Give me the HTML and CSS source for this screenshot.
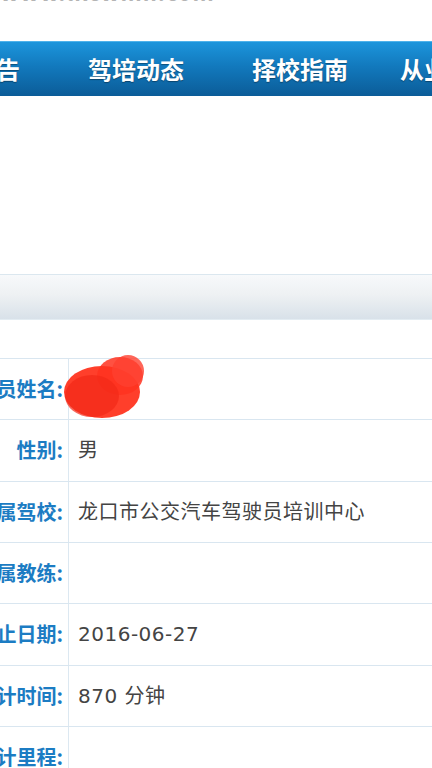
FILE: index.html
```html
<!DOCTYPE html>
<html lang="zh">
<head>
  <meta charset="UTF-8">
  <title>学员学时查询</title>
  <meta name="viewport" content="width=device-width, initial-scale=1">
  <link rel="stylesheet" href="styles.css">
</head>
<body>
  <div class="page">
    <div class="site-url">www.lkcwmh.com</div>

    <div class="nav">
      <a class="nav-item">通知公告</a>
      <a class="nav-item">驾培动态</a>
      <a class="nav-item">择校指南</a>
      <a class="nav-item">从业人员</a>
    </div>

    <div class="banner"></div>

    <div class="section-bar"></div>

    <div class="info">
      <div class="row">
        <div class="label">学员姓名:</div>
        <div class="value"></div>
        <svg class="scribble" width="90" height="70" viewBox="0 0 90 70">
          <ellipse cx="40" cy="40" rx="38" ry="26" fill="#ff2a14" opacity="0.9"/>
          <ellipse cx="58" cy="24" rx="23" ry="19" fill="#ff3320" opacity="0.85"/>
          <ellipse cx="30" cy="44" rx="27" ry="21" fill="#f22a18" opacity="0.7"/>
          <circle cx="66" cy="19" r="16" fill="#ff4030" opacity="0.8"/>
        </svg>
      </div>
      <div class="row">
        <div class="label">性别:</div>
        <div class="value">男</div>
      </div>
      <div class="row">
        <div class="label">所属驾校:</div>
        <div class="value">龙口市公交汽车驾驶员培训中心</div>
      </div>
      <div class="row">
        <div class="label">所属教练:</div>
        <div class="value"></div>
      </div>
      <div class="row">
        <div class="label">截止日期:</div>
        <div class="value">2016-06-27</div>
      </div>
      <div class="row">
        <div class="label">累计时间:</div>
        <div class="value">870 分钟</div>
      </div>
      <div class="row">
        <div class="label">累计里程:</div>
        <div class="value"></div>
      </div>
    </div>
  </div>
</body>
</html>
```

FILE: styles.css
```css
body {
  margin: 0;
  background: #fff;
  font-family: "Noto Sans CJK SC", "Noto Sans", sans-serif;
  overflow: hidden;
}
.page {
  width: 432px;
  overflow: hidden;
}
.site-url {
  margin-top: -20px;
  height: 23px;
  line-height: 23px;
  font-size: 22px;
  font-weight: bold;
  color: #b4b4b4;
  letter-spacing: 1px;
}
.nav {
  margin-top: 38px;
  height: 54px;
  display: flex;
  gap: 68px;
  margin-left: -76px;
  background: linear-gradient(#1c95dc, #1279bd 45%, #0b5c98);
  border-top: 1px solid #4fb2ea;
}
.nav-item {
  flex: 0 0 auto;
  line-height: 54px;
  font-size: 24px;
  font-weight: bold;
  color: #fff;
  white-space: nowrap;
  text-shadow: 0 1px 1px rgba(0, 0, 0, 0.35);
}
.nav-item:last-child {
  margin-left: -16px;
}
.banner {
  height: 178px;
}
.section-bar {
  height: 44px;
  border-top: 1px solid #dbe7ef;
  border-bottom: 1px solid #e3ecf2;
  background: linear-gradient(#f7f9fb, #eef1f3 45%, #d8e1e9);
}
.info {
  margin-top: 38px;
  margin-left: -40px;
  border-top: 1px solid #d9e6f0;
}
.row {
  position: relative;
  display: flex;
  height: 61.33px;
  box-sizing: border-box;
  border-bottom: 1px solid #d9e6f0;
}
.label {
  flex: 0 0 109px;
  box-sizing: border-box;
  padding-right: 5px;
  border-right: 1px solid #dce8f1;
  text-align: right;
  font-size: 20px;
  font-weight: bold;
  color: #1c7cc3;
  line-height: 60px;
  white-space: nowrap;
}
.value {
  padding-left: 9px;
  font-family: "DejaVu Sans", "Noto Sans CJK SC", sans-serif;
  font-size: 20px;
  letter-spacing: 0.5px;
  color: #444;
  line-height: 60px;
  white-space: nowrap;
}
.scribble {
  position: absolute;
  left: 102px;
  top: -7px;
}
```
